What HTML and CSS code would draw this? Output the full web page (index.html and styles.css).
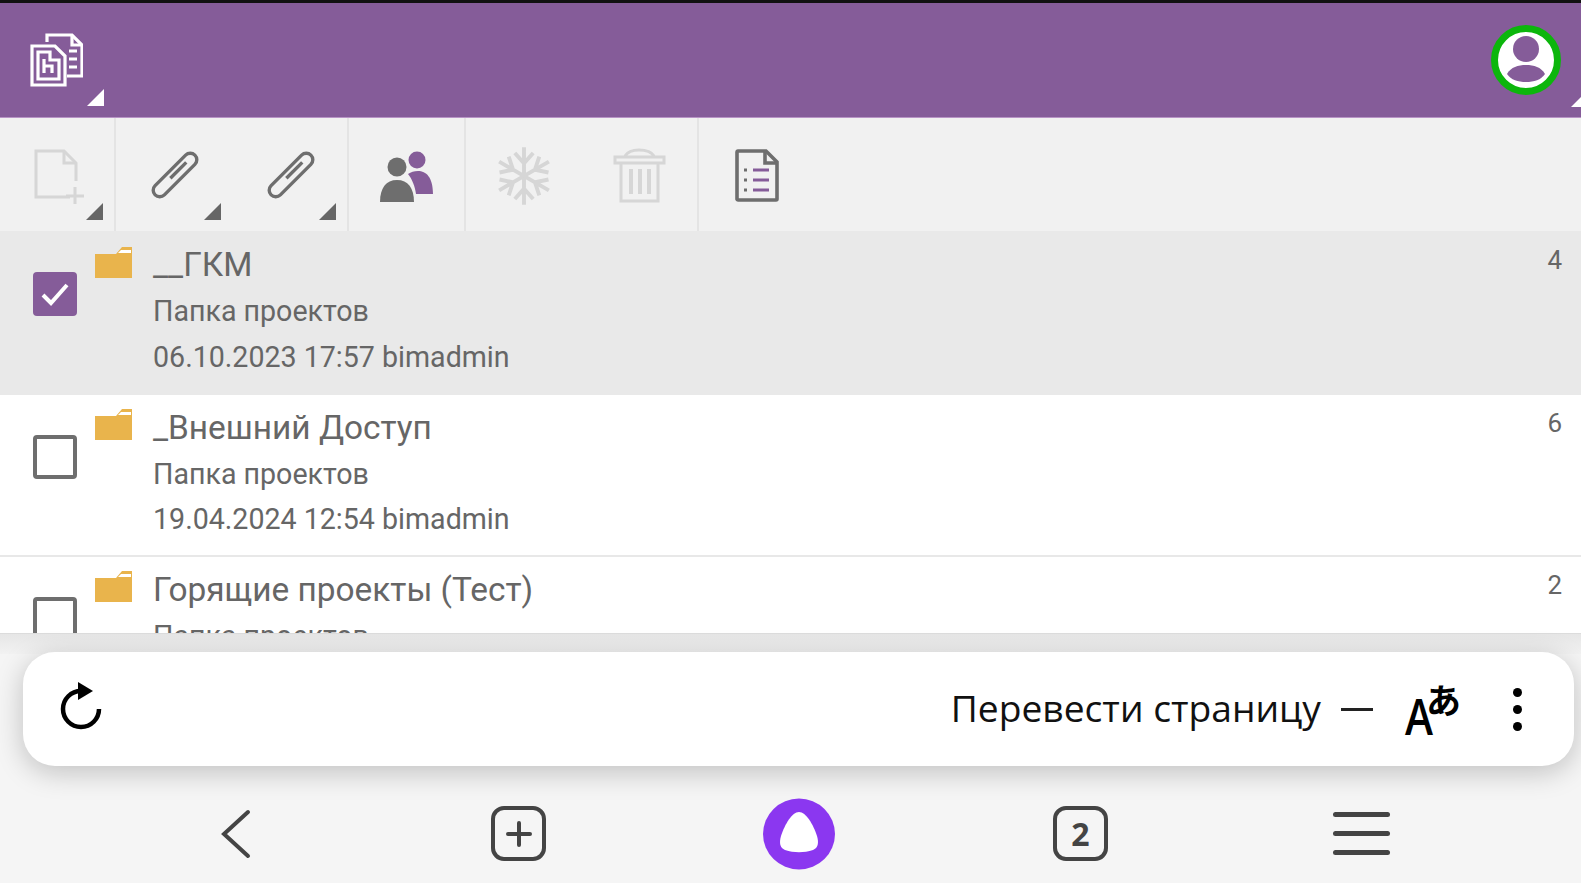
FILE: index.html
```html
<!DOCTYPE html>
<html lang="ru">
<head>
<meta charset="utf-8">
<title>Папки проектов</title>
<link rel="stylesheet" href="styles.css">
</head>
<body>
<div class="page">
  <div class="status"></div>
  <header class="header">
    <div class="cell head-cell">
      <svg class="ic-docs" viewBox="0 0 53 54"><path class="w" d="M17 9V2H42L52 12V43H37"/><path class="w" d="M42 2V12H52"/><path class="w2" d="M39 18H47M39 26H47M39 34H47"/><path class="wf" d="M2 13H25L35 23V52H2Z"/><path class="w2" d="M8 19H20V27H29V46H8ZM14 26V40M14 33H22V40"/></svg>
      <span class="tri tri-w"></span>
    </div>
    <div class="avatar-wrap">
      <svg class="ic-avatar" viewBox="0 0 70 70"><circle cx="35" cy="35" r="31.5" fill="#fff" stroke="#0cb60c" stroke-width="7"/><circle cx="35" cy="24" r="13" fill="#855c99"/><path d="M16 49C20 42 27 40 35 40S50 42 54 49C50 55 43 57 35 57S20 55 16 49Z" fill="#855c99"/></svg>
    </div>
    <span class="tri tri-w tri-edge"></span>
  </header>

  <nav class="toolbar">
    <div class="cell group g1">
      <svg class="ic ic-new" viewBox="0 0 50 55"><path class="l" d="M36 48H2V2H30L42 14V32"/><path class="l" d="M30 2V14H42"/><path class="l" d="M32 47H50M41 38V55"/></svg>
      <span class="tri"></span>
    </div>
    <div class="group g2">
      <div class="cell sub">
        <svg class="ic ic-clip" viewBox="-32 -32 64 64"><g transform="rotate(45)"><rect class="d" x="-7" y="-30" width="14" height="60" rx="7"/><path class="d" d="M-1 -18V6"/></g></svg>
        <span class="tri"></span>
      </div>
      <div class="cell sub">
        <svg class="ic ic-clip" viewBox="-32 -32 64 64"><g transform="rotate(45)"><rect class="d" x="-7" y="-30" width="14" height="60" rx="7"/><path class="d" d="M-1 -18V6"/></g></svg>
        <span class="tri"></span>
      </div>
    </div>
    <div class="cell group g3">
      <svg class="ic ic-people" viewBox="0 0 53 51"><circle cx="37" cy="9" r="8.5" fill="#855c99"/><path d="M28 23C31 21 34 20 38 20C46 20 53 26 53 43H36C35 35 32 28 28 23Z" fill="#855c99"/><circle cx="17" cy="16" r="9.5" fill="#6e6e6e"/><path d="M0 51C0 37 6 29 17 29S34 37 34 51Z" fill="#6e6e6e"/></svg>
    </div>
    <div class="group g4">
      <div class="cell sub">
        <svg class="ic ic-snow" viewBox="-26 -27 52 54">
          <g class="s"><path d="M0 -25V25M-8 -20L0 -11L8 -20M-8 20L0 11L8 20"/><path transform="rotate(60)" d="M0 -25V25M-8 -20L0 -11L8 -20M-8 20L0 11L8 20"/><path transform="rotate(120)" d="M0 -25V25M-8 -20L0 -11L8 -20M-8 20L0 11L8 20"/></g>
        </svg>
      </div>
      <div class="cell sub">
        <svg class="ic ic-trash" viewBox="0 0 53 55"><path class="l" d="M2 9H51V15H2ZM8 15V53H45V15M12 8C15 3 20 2 26 2S38 3 41 8"/><path class="t" d="M18 21V46M27 21V46M36 21V46"/></svg>
      </div>
    </div>
    <div class="cell group g5">
      <svg class="ic ic-list" viewBox="0 0 44 53"><path class="d" d="M2 3C2 2 3 2 3 2H31L42 13V50C42 51 41 51 41 51H3C2 51 2 50 2 50Z"/><path class="d" d="M30 2V14H42"/><path class="p" d="M18 21H34M18 31H34M18 41H34"/><path class="p dot" d="M9 21H12M9 31H12M9 41H12"/></svg>
    </div>
  </nav>

  <main class="list">
    <article class="row row-on">
      <span class="check check-on"><svg viewBox="0 0 44 44"><path d="M10 23L18 31L34 13"/></svg></span>
      <svg class="folder" viewBox="0 0 37 31"><path d="M0 7L0 31H37V0H27L21 7Z" fill="#e9b44c"/><path d="M26 3H36V6H23Z" fill="#fff"/></svg>
      <div class="info">
        <div class="title">__ГКМ</div>
        <div class="meta">Папка проектов</div>
        <div class="meta">06.10.2023 17:57 bimadmin</div>
      </div>
      <div class="count">4</div>
    </article>
    <article class="row">
      <span class="check"></span>
      <svg class="folder" viewBox="0 0 37 31"><path d="M0 7L0 31H37V0H27L21 7Z" fill="#e9b44c"/><path d="M26 3H36V6H23Z" fill="#fff"/></svg>
      <div class="info">
        <div class="title">_Внешний Доступ</div>
        <div class="meta">Папка проектов</div>
        <div class="meta">19.04.2024 12:54 bimadmin</div>
      </div>
      <div class="count">6</div>
    </article>
    <article class="row">
      <span class="check"></span>
      <svg class="folder" viewBox="0 0 37 31"><path d="M0 7L0 31H37V0H27L21 7Z" fill="#e9b44c"/><path d="M26 3H36V6H23Z" fill="#fff"/></svg>
      <div class="info">
        <div class="title">Горящие проекты (Тест)</div>
        <div class="meta">Папка проектов</div>
      </div>
      <div class="count">2</div>
    </article>
  </main>

  <section class="panel">
    <div class="bar">
      <svg class="ic-reload" viewBox="0 0 44 48"><path d="M22 9A18 18 0 1 0 40 27"/><path class="fill" d="M19 0L34 9L19 18Z"/></svg>
      <span class="bar-text">Перевести страницу</span>
      <span class="dash"></span>
      <svg class="ic-tr" viewBox="0 0 54 54"><text class="tr-a" x="0" y="53" textLength="28" lengthAdjust="spacingAndGlyphs">A</text><text class="tr-b" x="21" y="32">あ</text></svg>
      <span class="kebab"><i></i><i></i><i></i></span>
    </div>
    <div class="nav">
      <div class="nav-item"><svg class="ic-back" viewBox="0 0 30 50"><path d="M27 3L3 25L27 47"/></svg></div>
      <div class="nav-item"><span class="tabbox"><svg viewBox="0 0 26 26"><path d="M13 2V24M2 13H24"/></svg></span></div>
      <div class="nav-item"><svg class="ic-alice" viewBox="0 0 72 72"><ellipse cx="36" cy="36" rx="36" ry="35.5" fill="#8b37f0"/><path d="M36 14C43 14 50 26 54 38C56 45 55 50 50 52C41 55 31 55 22 52C17 50 16 45 18 38C22 26 29 14 36 14Z" fill="#fff"/></svg></div>
      <div class="nav-item"><span class="tabbox tabnum">2</span></div>
      <div class="nav-item"><span class="burger"><i></i><i></i><i></i></span></div>
    </div>
  </section>
</div>
</body>
</html>
```
FILE: styles.css
```css
* { box-sizing: border-box; }
html, body { margin: 0; height: 100%; overflow: hidden; }
body { font-family: Roboto, "Noto Sans", sans-serif; background: #fff; }
svg { display: block; }
.page { width: 1581px; height: 883px; display: flex; flex-direction: column; position: relative; overflow: hidden; }
.status { height: 3px; background: #111; flex: none; }

.header { height: 115px; flex: none; background: #855c99; display: flex; align-items: center; justify-content: space-between; padding-right: 20px; position: relative; border-bottom: 1px solid #b894c6; }
.head-cell { width: 115px; height: 100%; }
.cell { position: relative; display: flex; align-items: center; justify-content: center; }
.ic-docs { width: 53px; height: 54px; margin-right: 2px; margin-bottom: 1px; }
.ic-docs path { fill: none; stroke: #fff; stroke-width: 3.2; }
.ic-docs .wf { fill: #855c99; }
.ic-avatar { width: 70px; height: 70px; }
.avatar-wrap { margin-bottom: 1px; }

.tri { position: absolute; right: 11px; bottom: 11px; width: 0; height: 0; border-style: solid; border-width: 0 0 17px 17px; border-color: transparent transparent #666 transparent; }
.tri-w { border-bottom-color: #fff; }
.tri-edge { right: -7px; bottom: 10px; }

.toolbar { height: 113px; flex: none; background: #f1f1f1; display: flex; }
.group { height: 100%; display: flex; border-right: 2px solid #e4e4e4; }
.g1 { width: 116px; }
.g2 { width: 233px; }
.g3 { width: 117px; }
.g4 { width: 233px; }
.g5 { width: 116px; border-right: 0; }
.sub { flex: 1; height: 100%; }
.ic-new { width: 50px; height: 55px; margin-left: 4px; margin-top: 4px; }
.ic-clip { width: 60px; height: 60px; margin-left: 3px; }
.ic-people { width: 53px; height: 51px; margin-top: 4px; }
.ic-snow { width: 60px; height: 62px; margin-top: 3px; }
.ic-trash { width: 53px; height: 55px; margin-top: 2px; }
.ic-list { width: 44px; height: 53px; margin-top: 2px; }
.l, .t { fill: none; stroke: #d6d6d6; stroke-width: 3; }
.t { stroke-width: 4; }
.s path { fill: none; stroke: #d6d6d6; stroke-width: 3.4; }
.d { fill: none; stroke: #6e6e6e; stroke-width: 3.6; }
.p { fill: none; stroke: #855c99; stroke-width: 3; }
.dot { stroke: #6e6e6e; }

.list { height: 402px; flex: none; overflow: hidden; background: #fff; }
.row { height: 162px; display: flex; align-items: flex-start; padding: 0 19px 0 33px; border-bottom: 2px solid #e8e8e8; color: #666; }
.row:first-child { height: 164px; }
.row-on { background: #e9e9e9; border-bottom-color: #e9e9e9; }
.check { width: 44px; height: 44px; margin-top: 41px; border: 4px solid #6e6e6e; border-radius: 4px; flex: none; background: #fff; }
.check-on { background: #855c99; border: 0; }
.check-on svg { width: 44px; height: 44px; }
.check-on path { fill: none; stroke: #fff; stroke-width: 4; }
.folder { width: 37px; height: 31px; margin: 16px 0 0 18px; flex: none; }
.info { margin-left: 21px; flex: 1; padding-top: 11px; }
.title { font-size: 33.4px; line-height: 46px; }
.meta { font-size: 28.6px; line-height: 45px; }
.meta:nth-child(2) { margin-top: 1px; }
.meta:nth-child(3) { margin-top: 1px; }
.count { font-size: 26px; line-height: 30px; margin-top: 14px; }
.row + .row .check { margin-top: 40px; }
.row + .row .folder { margin-top: 14px; }
.row + .row .info { padding-top: 10px; }
.row + .row .count { margin-top: 13px; }
.row + .row .meta:nth-child(3) { margin-top: 0; }

.panel { flex: 1; background: #f5f5f5; border-top: 1px solid #dcdcdc; display: flex; flex-direction: column; padding-top: 18px; background-image: linear-gradient(#e6e6e6, #f2f2f2 20px, #f5f5f5 20px); }
.bar { height: 114px; flex: none; margin: 0 7px 0 23px; background: #fff; border-radius: 32px; box-shadow: 0 6px 28px rgba(0,0,0,.22); display: flex; align-items: center; padding: 0 52px 0 36px; }
.ic-reload { width: 44px; height: 48px; flex: none; margin-bottom: 6px; }
.ic-reload path { fill: none; stroke: #000; stroke-width: 4.5; }
.ic-reload .fill { fill: #000; stroke: none; }
.bar-text { margin-left: auto; margin-bottom: 3px; font-family: "Open Sans", sans-serif; font-size: 37.2px; color: #111; line-height: 44px; }
.dash { width: 32px; height: 3px; background: #222; margin-left: 20px; }
.ic-tr { width: 54px; height: 54px; margin-left: 32px; overflow: visible; }
.tr-a { font-family: "Open Sans", sans-serif; font-size: 50px; font-weight: 600; fill: #000; }
.tr-b { font-family: "Noto Sans CJK JP", sans-serif; font-size: 35px; font-weight: 700; fill: #000; }
.kebab { display: flex; flex-direction: column; gap: 8px; margin-left: 54px; }
.kebab i { width: 9px; height: 9px; border-radius: 50%; background: #000; display: block; }

.nav { flex: 1; display: grid; grid-template-columns: repeat(5, 281px); padding: 18px 0 0 95px; align-items: center; }
.nav-item { display: flex; justify-content: center; align-items: center; }
.nav-item:nth-child(2), .nav-item:nth-child(4), .nav-item:nth-child(5) { padding-left: 4px; }
.nav-item:nth-child(3) { padding-left: 2px; }
.ic-back { width: 30px; height: 50px; }
.ic-back path { fill: none; stroke: #444; stroke-width: 4; stroke-linecap: round; }
.tabbox { width: 55px; height: 55px; border: 4px solid #444; border-radius: 13px; display: flex; align-items: center; justify-content: center; color: #444; }
.tabbox svg { width: 26px; height: 26px; }
.tabbox path { fill: none; stroke: #444; stroke-width: 4; stroke-linecap: round; }
.tabnum { font-size: 32px; font-weight: 700; font-family: "Open Sans", sans-serif; }
.ic-alice { width: 72px; height: 72px; }
.burger { display: flex; flex-direction: column; gap: 14px; }
.burger i { display: block; width: 57px; height: 5px; border-radius: 3px; background: #444; }
```
